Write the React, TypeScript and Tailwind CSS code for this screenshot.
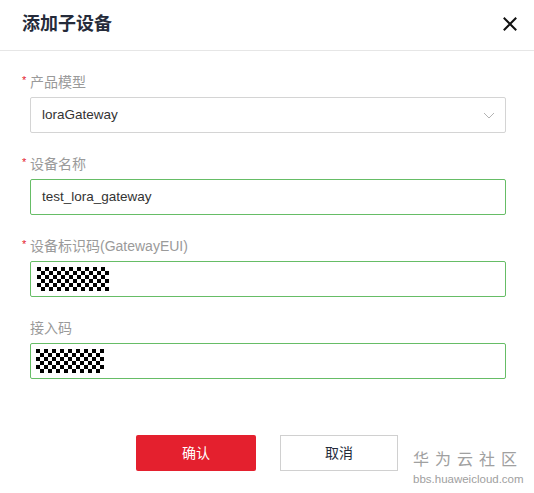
import { ReactNode } from "react";

function Mosaic({ cols, rows }: { cols: number; rows: number }) {
  const cells = [];
  for (let r = 0; r < rows; r++) {
    for (let c = 0; c < cols; c++) {
      if ((r + c) % 2 === 0) {
        cells.push(<rect key={`${r}-${c}`} x={c * 4} y={r * 4} width={4} height={4} fill="#000" />);
      }
    }
  }
  return (
    <svg width={cols * 4} height={rows * 4} viewBox={`0 0 ${cols * 4} ${rows * 4}`} shapeRendering="crispEdges">
      {cells}
    </svg>
  );
}

function Field({ label, required, children }: { label: string; required?: boolean; children: ReactNode }) {
  return (
    <div className="flex flex-col gap-[5px]">
      <div className="flex items-center h-5 pl-[22px] text-sm leading-5 text-[#9a9a9a]">
        <span className="w-[8px] text-[11px] leading-none text-[#e4202e] -mt-[4px]">{required ? "*" : ""}</span>
        <span>{label}</span>
      </div>
      {children}
    </div>
  );
}

export default function App() {
  return (
    <div
      className="relative w-[534px] h-[493px] bg-white overflow-hidden"
      style={{ fontFamily: '"Liberation Sans", "Noto Sans CJK SC", sans-serif' }}
    >
      <div className="flex items-center justify-between h-[51px] pl-[22px] pr-[17px] border-b border-[#e6e6e6]">
        <h1 className="text-[18px] font-bold text-[#252b3a] -mt-[2px]">添加子设备</h1>
        <svg width="14" height="14" viewBox="0 0 14 14" className="-mt-[3px]">
          <path d="M1.5 1.5 L12.5 12.5 M12.5 1.5 L1.5 12.5" stroke="#111" strokeWidth="2" strokeLinecap="square" />
        </svg>
      </div>

      <div className="flex flex-col gap-[21px] pt-[21px]">
        <Field label="产品模型" required>
          <div className="ml-[30px] w-[476px] h-9 border border-[#d4d4d4] rounded-[2px] flex items-center justify-between pl-[11px] pr-[10px] text-[13.5px] text-[#333]">
            <span>loraGateway</span>
            <svg width="12" height="7" viewBox="0 0 12 7">
              <path d="M1 1 L6 6 L11 1" fill="none" stroke="#b3b3b3" strokeWidth="1" />
            </svg>
          </div>
        </Field>
        <Field label="设备名称" required>
          <div className="ml-[30px] w-[476px] h-9 border border-[#66bd66] rounded-[2px] flex items-center pl-[11px] text-[13.5px] text-[#333]">
            test_lora_gateway
          </div>
        </Field>
        <Field label="设备标识码(GatewayEUI)" required>
          <div className="ml-[30px] w-[476px] h-9 border border-[#66bd66] rounded-[2px] flex items-center pl-[6px]">
            <Mosaic cols={18} rows={6} />
          </div>
        </Field>
        <Field label="接入码">
          <div className="ml-[30px] w-[476px] h-9 border border-[#66bd66] rounded-[2px] flex items-center pl-[5px]">
            <Mosaic cols={17} rows={6} />
          </div>
        </Field>
      </div>

      <div className="flex justify-center gap-6 mt-[56px]">
        <button className="w-[120px] h-9 bg-[#e4202e] rounded-[2px] text-sm text-white">确认</button>
        <button className="w-[118px] h-9 border border-[#d0d0d0] bg-white text-sm text-[#252b3a]">取消</button>
      </div>

      <div className="absolute left-[413px] top-[452px] flex flex-col text-[#a0a0a0] leading-none">
        <span className="text-[16px] tracking-[6px]">华为云社区</span>
        <span className="text-[11.5px] mt-[6px]">bbs.huaweicloud.com</span>
      </div>
    </div>
  );
}
